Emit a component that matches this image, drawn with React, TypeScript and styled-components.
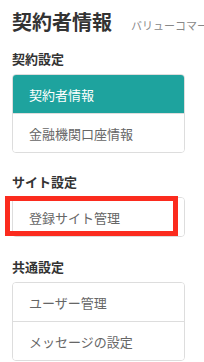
import React from "react";
import styled, { createGlobalStyle } from "styled-components";

const Global = createGlobalStyle`
  html, body { margin: 0; padding: 0; background: #fff; }
  body {
    font-family: "Noto Sans CJK JP", "Noto Sans", sans-serif;
    color: #333;
    overflow: hidden;
  }
`;

const Page = styled.div`
  width: 204px;
  padding: 7px 0 0 12px;
  box-sizing: border-box;
  overflow: hidden;
`;

const Header = styled.div`
  display: flex;
  align-items: baseline;
  white-space: nowrap;
  height: 30px;
`;

const Title = styled.h1`
  margin: 0;
  font-size: 20px;
  line-height: 30px;
  font-weight: 700;
  color: #333;
`;

const Subtitle = styled.span`
  margin-left: 19px;
  font-size: 11px;
  color: #888;
`;

const Section = styled.section<{ $top: number }>`
  margin-top: ${(p) => p.$top}px;
  width: 173px;
`;

const Label = styled.h2`
  margin: 0 0 5px;
  font-size: 13px;
  line-height: 20px;
  font-weight: 700;
  color: #333;
`;

const CardWrap = styled.div`
  position: relative;
`;

const Card = styled.ul`
  list-style: none;
  margin: 0;
  padding: 0;
  border: 1px solid #ddd;
  border-radius: 4px;
  overflow: hidden;
  background: #fff;
`;

const Item = styled.li<{ $active?: boolean }>`
  height: 38px;
  display: flex;
  align-items: center;
  padding-left: 16px;
  font-size: 13px;
  color: ${(p) => (p.$active ? "#fff" : "#666")};
  background: ${(p) => (p.$active ? "#1ea39e" : "#fff")};
  & + & {
    border-top: 1px solid #ddd;
  }
`;

const Highlight = styled.div`
  position: absolute;
  left: -7px;
  top: -1px;
  width: 173px;
  height: 40px;
  box-sizing: border-box;
  border: 5px solid #fb2b1e;
  pointer-events: none;
`;

export default function App() {
  return (
    <>
      <Global />
      <Page>
        <Header>
          <Title>契約者情報</Title>
          <Subtitle>バリューコマース株式会社</Subtitle>
        </Header>
        <Section $top={12}>
          <Label>契約設定</Label>
          <Card>
            <Item $active>契約者情報</Item>
            <Item>金融機関口座情報</Item>
          </Card>
        </Section>
        <Section $top={19}>
          <Label>サイト設定</Label>
          <CardWrap>
            <Card>
              <Item>登録サイト管理</Item>
            </Card>
            <Highlight />
          </CardWrap>
        </Section>
        <Section $top={20}>
          <Label>共通設定</Label>
          <Card>
            <Item>ユーザー管理</Item>
            <Item>メッセージの設定</Item>
          </Card>
        </Section>
      </Page>
    </>
  );
}
